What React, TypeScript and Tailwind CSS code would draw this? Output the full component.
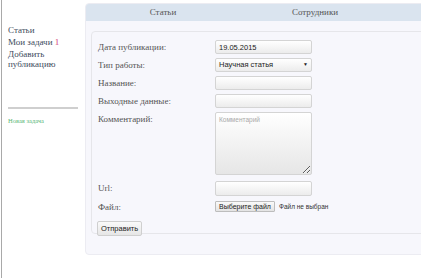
import React from 'react';

const serif = "font-['Liberation_Serif','Times_New_Roman',serif]";
const sans = "font-['Liberation_Sans',Arial,sans-serif]";

const inputCls =
  'h-[14px] w-[97px] rounded-[2px] border border-[#d4d4d4] bg-gradient-to-b from-white to-[#ececec] px-[3px] text-[7.5px] text-[#222] outline-none';

const Label = ({ children }: { children: React.ReactNode }) => (
  <div className={`${serif} pt-[1px] text-[9px] leading-[12px] text-[#555]`}>{children}</div>
);

export default function App() {
  return (
    <div className="flex h-[278px] w-[421px] overflow-hidden bg-white">
      {/* Sidebar */}
      <aside className="ml-[1px] flex w-[84px] shrink-0 flex-col border-l border-[#a9a9a9] pl-[6px] pt-[25px]">
        <div className={`${serif} flex flex-col gap-[2px] text-[9px] leading-[10px] text-[#3d4b5c]`}>
          <span>Статьи</span>
          <span>
            Мои задачи <span className="text-[#d4457a]">1</span>
          </span>
          <span>
            Добавить
            <br />
            публикацию
          </span>
        </div>
        <div className="mt-[38px] h-[2px] w-[70px] bg-[#cfcfcf]" />
        <div className={`${serif} mt-[7px] text-[6.5px] text-[#5cb877]`}>Новая задача</div>
      </aside>

      {/* Main panel */}
      <main className="mt-[3px] h-[252px] w-[350px] shrink-0 overflow-hidden rounded-l-[4px] border border-[#ececf2] bg-[#f7f7fc]">
        <div className={`${serif} flex h-[17px] items-center bg-[#dae4ef] text-[9px] text-[#555]`}>
          <div className="w-[154px] text-center">Статьи</div>
          <div className="w-[150px] text-center">Сотрудники</div>
        </div>

        <div className="ml-[5px] mt-[10px] h-[203px] rounded-l-[4px] border border-[#e6e6ea] bg-[#f7f7fc] pl-[6px] pt-[8px]">
          <div className="grid grid-cols-[117px_97px] gap-y-[4px]">
            <Label>Дата публикации:</Label>
            <input className={`${sans} ${inputCls}`} defaultValue="19.05.2015" />

            <Label>Тип работы:</Label>
            <div
              className={`${sans} flex h-[14px] w-[97px] items-center justify-between rounded-[2px] border border-[#d4d4d4] bg-gradient-to-b from-white to-[#ececec] px-[3px] text-[7.5px] text-[#222]`}
            >
              <span>Научная статья</span>
              <span className="text-[5px]">▼</span>
            </div>

            <Label>Название:</Label>
            <input className={`${sans} ${inputCls}`} />

            <Label>Выходные данные:</Label>
            <input className={`${sans} ${inputCls}`} />

            <Label>Комментарий:</Label>
            <textarea
              placeholder="Комментарий"
              className={`${sans} h-[63px] w-[97px] resize-y rounded-[2px] border border-[#d4d4d4] bg-gradient-to-b from-white to-[#e6e6e6] px-[3px] py-[2px] text-[6.5px] text-[#222] outline-none placeholder:text-[#aaa]`}
            />

            <div className="mt-[2px]">
              <Label>Url:</Label>
            </div>
            <input className={`${sans} ${inputCls} mt-[2px] h-[15px]`} />

            <Label>Файл:</Label>
            <div className={`${sans} flex items-center gap-[4px] text-[6.5px] text-[#333]`}>
              <button className="h-[11px] whitespace-nowrap rounded-[1px] border border-[#bdbdbd] bg-gradient-to-b from-[#fafafa] to-[#e3e3e3] px-[3px] text-[7px] text-[#222]">
                Выберите файл
              </button>
              <span className="whitespace-nowrap">Файл не выбран</span>
            </div>
          </div>

          <button
            className={`${sans} -ml-[1px] mt-[2px] h-[15px] rounded-[2px] border border-[#cfcfcf] bg-gradient-to-b from-[#fafafa] to-[#e6e6e6] px-[3px] text-[7.5px] text-[#222]`}
          >
            Отправить
          </button>
        </div>
      </main>
    </div>
  );
}
